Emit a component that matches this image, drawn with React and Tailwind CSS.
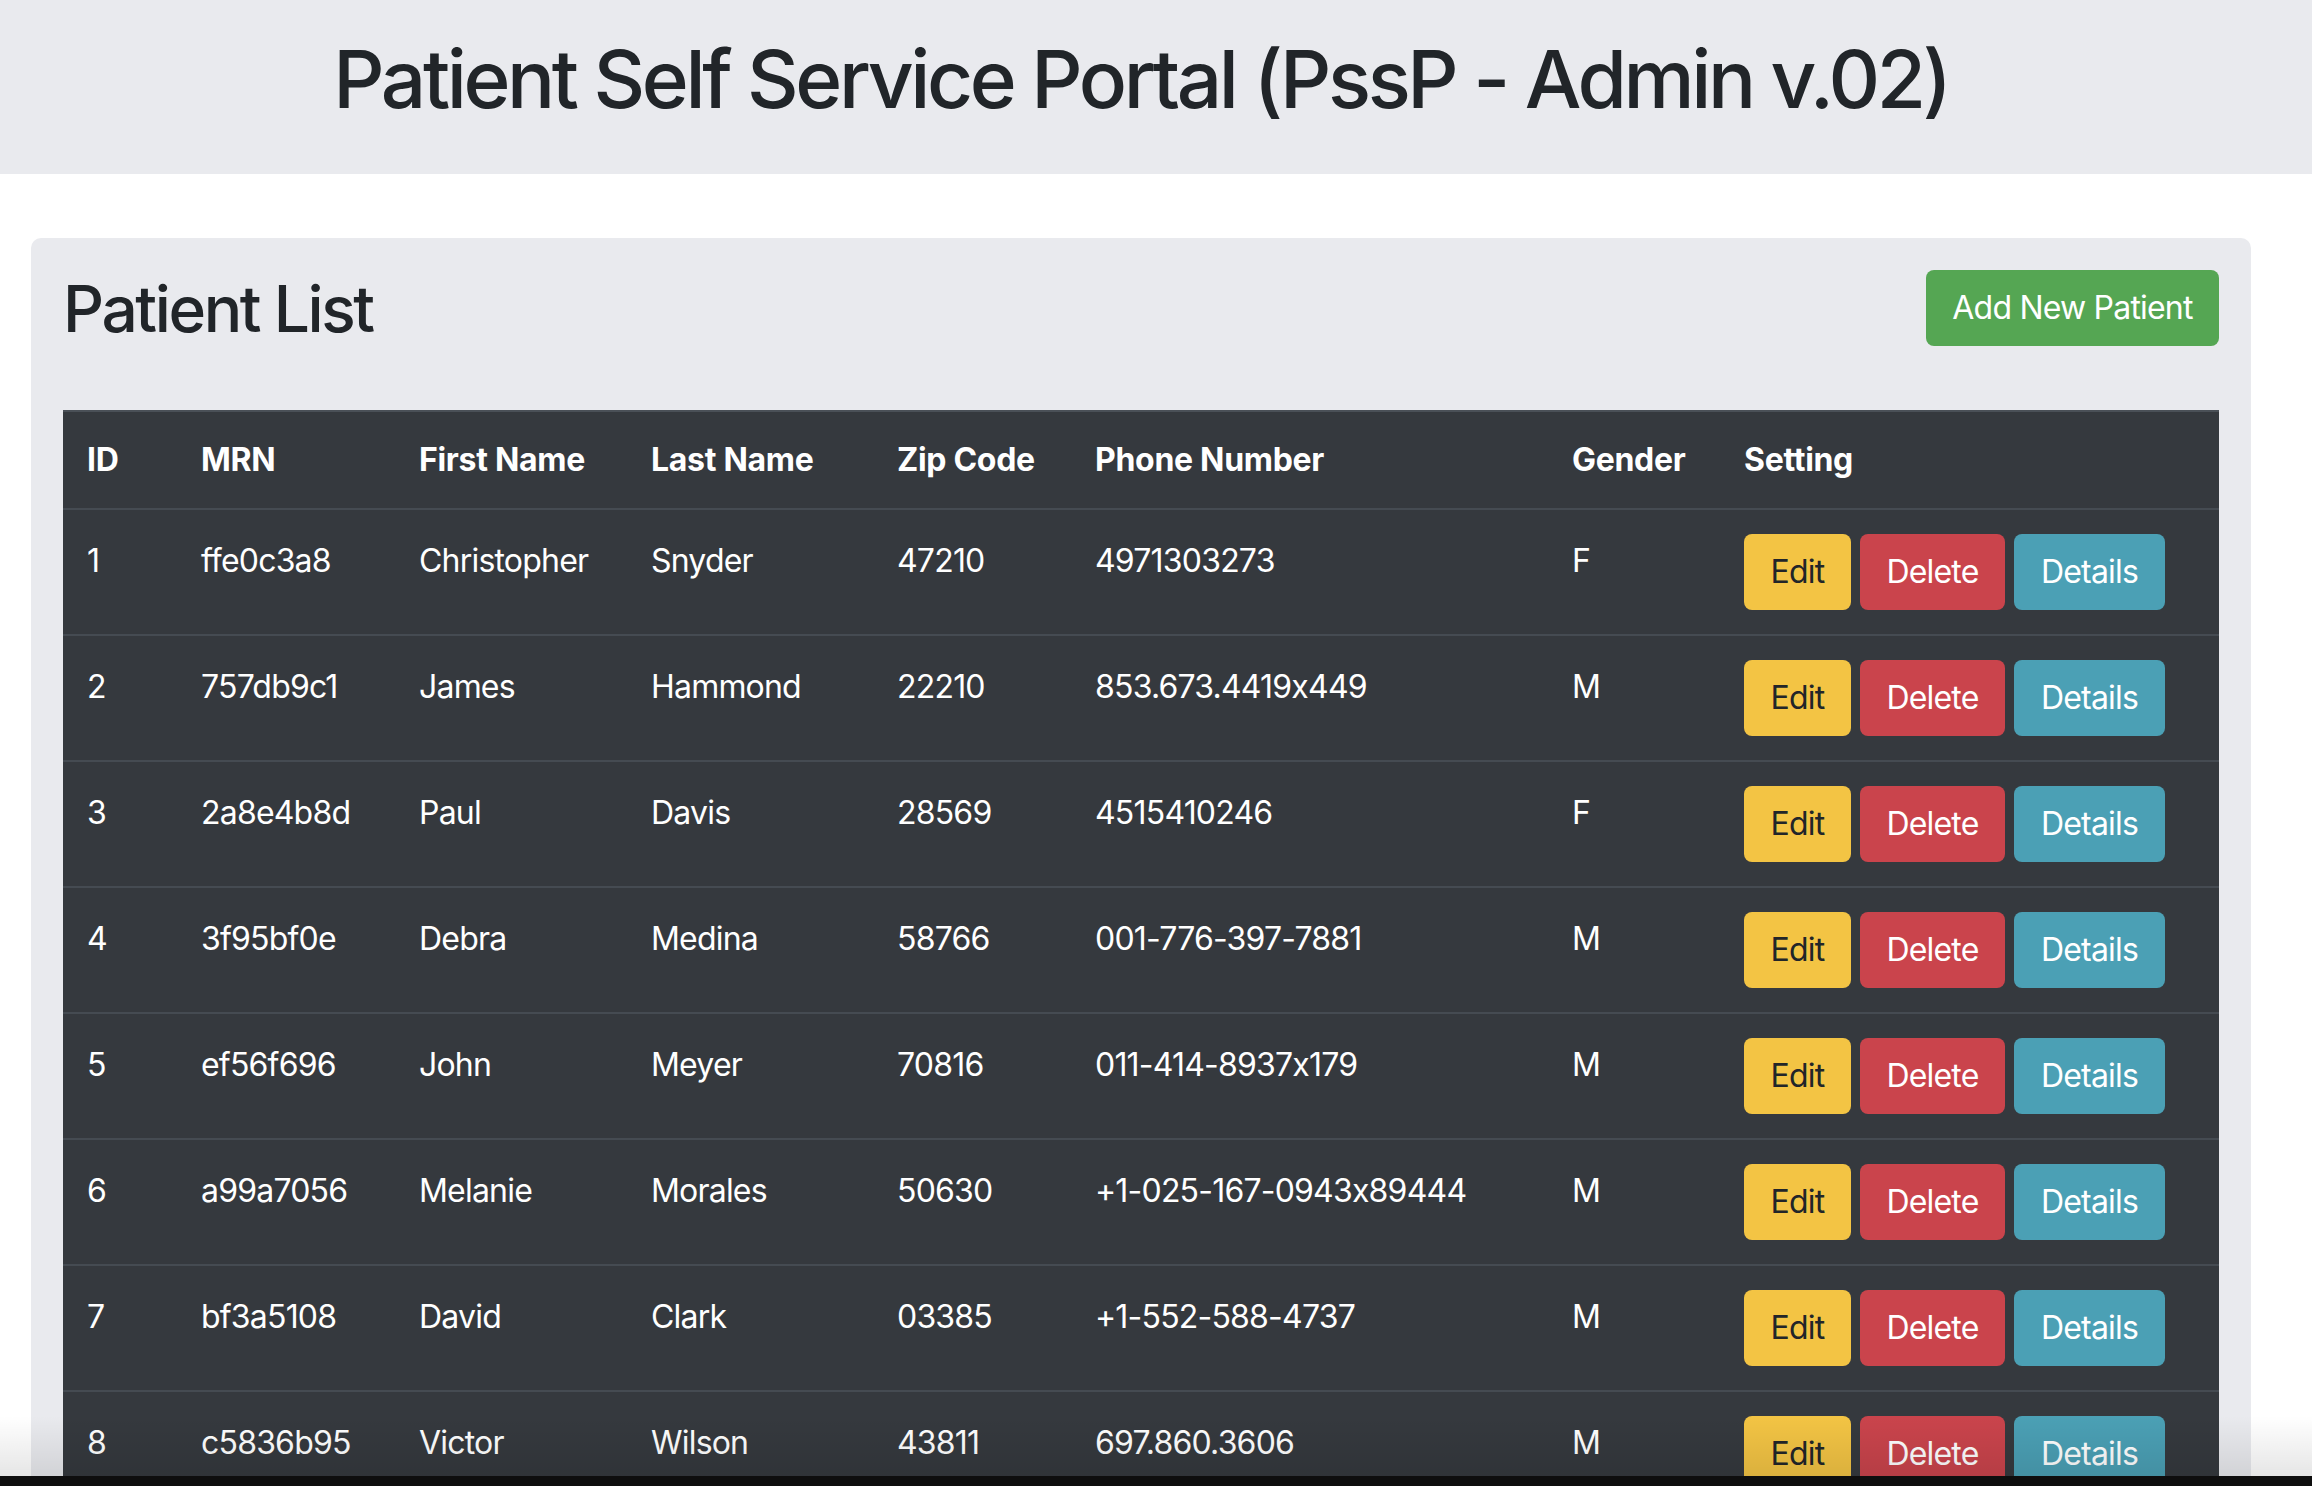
import React from "react";

const rows = [
  ["1", "ffe0c3a8", "Christopher", "Snyder", "47210", "4971303273", "F"],
  ["2", "757db9c1", "James", "Hammond", "22210", "853.673.4419x449", "M"],
  ["3", "2a8e4b8d", "Paul", "Davis", "28569", "4515410246", "F"],
  ["4", "3f95bf0e", "Debra", "Medina", "58766", "001-776-397-7881", "M"],
  ["5", "ef56f696", "John", "Meyer", "70816", "011-414-8937x179", "M"],
  ["6", "a99a7056", "Melanie", "Morales", "50630", "+1-025-167-0943x89444", "M"],
  ["7", "bf3a5108", "David", "Clark", "03385", "+1-552-588-4737", "M"],
  ["8", "c5836b95", "Victor", "Wilson", "43811", "697.860.3606", "M"],
];

const headers = ["ID", "MRN", "First Name", "Last Name", "Zip Code", "Phone Number", "Gender", "Setting"];

const grid = "grid grid-cols-[114px_218px_232px_246px_198px_477px_172px_499px]";

export default function App() {
  return (
    <div className="relative h-[1486px] w-[2312px] overflow-hidden bg-white font-['Inter','Noto_Sans',sans-serif] text-[#212529] [font-feature-settings:'calt'_0]">
      <header className="h-[174px] w-full bg-[#e9eaee]">
        <div className="w-[2282px] pt-[31px] text-center">
          <h1 className="text-[80px] font-medium leading-[96px] tracking-[-3.4px]">
            Patient Self Service Portal (PssP - Admin v.02)
          </h1>
        </div>
      </header>

      <main className="ml-[31px] mt-[64px] w-[2220px] rounded-[10px] bg-[#e9eaee] px-[32px] pt-[32px] pb-[40px]">
        <div className="flex h-[140px] items-start justify-between">
          <h2 className="text-[64px] font-medium leading-[77px] tracking-[-2.4px]">Patient List</h2>
          <button className="flex h-[76px] w-[293px] items-center justify-center rounded-[8px] bg-[#55a653] text-[32px] tracking-[-0.8px] text-white">
            Add New Patient
          </button>
        </div>

        <div className="w-[2156px] bg-[#35393e] text-[32px] text-white">
          <div className={`${grid} h-[98px] items-center border-t-2 border-[#4a5057] font-bold tracking-[-0.3px]`}>
            {headers.map((h) => (
              <div key={h} className="px-[24px] leading-[48px]">{h}</div>
            ))}
          </div>
          {rows.map((r) => (
            <div key={r[0]} className={`${grid} border-t-2 border-[#454b52] py-[24px] tracking-[-0.8px]`}>
              {r.map((c, i) => (
                <div key={i} className="px-[24px] pt-[3px] leading-[48px] whitespace-nowrap">{c}</div>
              ))}
              <div className="flex gap-[9px] px-[24px]">
                <button className="flex h-[76px] w-[107px] items-center justify-center rounded-[8px] bg-[#f3c444] text-[#212529]">Edit</button>
                <button className="flex h-[76px] w-[145px] items-center justify-center rounded-[8px] bg-[#ca444c] text-white">Delete</button>
                <button className="flex h-[76px] w-[151px] items-center justify-center rounded-[8px] bg-[#4ba0b5] text-white">Details</button>
              </div>
            </div>
          ))}
        </div>
      </main>

      <div className="pointer-events-none absolute bottom-[10px] left-0 h-[60px] w-full bg-gradient-to-b from-black/0 to-black/10" />
      <div className="absolute bottom-0 left-0 h-[10px] w-full bg-[#0e0e0e]" />
    </div>
  );
}
